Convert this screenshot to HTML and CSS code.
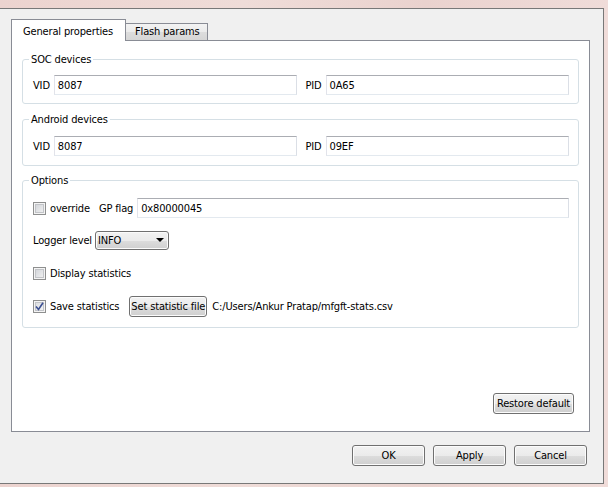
FILE: index.html
```html
<!DOCTYPE html>
<html>
<head>
<meta charset="utf-8">
<link rel="stylesheet" href="styles.css">
</head>
<body>
<div class="window">
  <div class="tabs">
    <div class="tab active">General properties</div>
    <div class="tab">Flash params</div>
  </div>
  <div class="pane">
    <fieldset class="group soc">
      <legend>SOC devices</legend>
      <div class="pair">
        <div class="field"><span class="lbl">VID</span><div class="input">8087</div></div>
        <div class="field"><span class="lbl">PID</span><div class="input">0A65</div></div>
      </div>
    </fieldset>
    <fieldset class="group android">
      <legend>Android devices</legend>
      <div class="pair">
        <div class="field"><span class="lbl">VID</span><div class="input">8087</div></div>
        <div class="field"><span class="lbl">PID</span><div class="input">09EF</div></div>
      </div>
    </fieldset>
    <fieldset class="group options">
      <legend>Options</legend>
      <div class="opt-row row1">
        <span class="check"></span><span class="cb-text">override</span>
        <span class="gp">GP flag</span>
        <div class="input grow">0x80000045</div>
      </div>
      <div class="opt-row row2">
        <span>Logger level</span>
        <div class="combo"><span>INFO</span><span class="arrow"></span></div>
      </div>
      <div class="opt-row row3">
        <span class="check"></span><span class="cb-text">Display statistics</span>
      </div>
      <div class="opt-row row4">
        <span class="check checked"><svg width="9" height="9" viewBox="0 0 9 9"><path d="M1 4.5 L3.5 7.5 L8 0.8" fill="none" stroke="#3b4f92" stroke-width="1.6"/></svg></span>
        <span class="cb-text">Save statistics</span>
        <div class="btn set">Set statistic file</div>
        <span class="path">C:/Users/Ankur Pratap/mfgft-stats.csv</span>
      </div>
    </fieldset>
    <div class="restore-row"><div class="btn restore">Restore default</div></div>
  </div>
  <div class="dialog-buttons">
    <div class="btn dlg">OK</div>
    <div class="btn dlg">Apply</div>
    <div class="btn dlg">Cancel</div>
  </div>
</div>
</body>
</html>
```
FILE: styles.css
```css
html, body {
  margin: 0;
  padding: 0;
}
body {
  width: 608px;
  height: 487px;
  overflow: hidden;
  background: linear-gradient(90deg, #ecd3cf 0%, #efdcd8 40%, #ead2ce 70%, #f0dcd9 100%);
  font-family: "DejaVu Sans Condensed", "Liberation Sans", Arial, sans-serif;
  font-size: 11px;
  letter-spacing: -0.15px;
  line-height: 13px;
  color: #000;
}
.window {
  margin-top: 8px;
  width: 604px;
  height: 476px;
  box-sizing: border-box;
  border-top: 1px solid #787878;
  border-right: 1px solid #787878;
  border-bottom: 1px solid #787878;
  background: #f0f0f0;
  padding: 10px 13px 0 11px;
}
.tabs {
  display: flex;
  align-items: flex-end;
  height: 21px;
}
.tab {
  box-sizing: border-box;
  border: 1px solid #898c95;
  border-bottom: none;
  white-space: nowrap;
}
.tab.active {
  position: relative;
  z-index: 1;
  background: #fff;
  width: 115px;
  padding: 5px 0 3px 11px;
  margin-bottom: -1px;
}
.tab:not(.active) {
  width: 82px;
  border-left: none;
  padding: 1px 0 2px 9px;
  background: linear-gradient(#f3f3f3, #ebebeb 50%, #dddddd 51%, #d6d6d6);
}
.pane {
  box-sizing: border-box;
  height: 392px;
  border: 1px solid #898c95;
  background: #fff;
  padding: 12px 10px 17px 10px;
  display: flex;
  flex-direction: column;
}
.group {
  margin: 0;
  border: 1px solid #d5dfe5;
  border-radius: 3px;
  min-width: 0;
}
.group legend {
  padding: 0 2px;
  margin-left: -4px;
  line-height: 13px;
}
.soc {
  padding: 9px 9px 8px 10px;
}
.android {
  margin-top: 9px;
  padding: 10px 9px 9px 10px;
}
.options {
  margin-top: 8px;
  padding: 11px 9px 10px 10px;
}
.pair {
  display: flex;
  gap: 9px;
}
.field {
  flex: 1;
  display: flex;
  align-items: center;
  gap: 4px;
}
.input {
  box-sizing: border-box;
  height: 20px;
  flex: 1;
  border: 1px solid;
  border-color: #abadb3 #dbdfe6 #e3e9ef #e2e3ea;
  background: #fff;
  padding: 0 3px;
  display: flex;
  align-items: center;
}
.opt-row {
  display: flex;
  align-items: center;
}
.row1 { height: 20px; }
.row2 { height: 20px; margin-top: 12px; }
.row3 { height: 22px; margin-top: 12px; }
.row4 { height: 21px; margin-top: 12px; }
.check {
  box-sizing: border-box;
  width: 13px;
  height: 13px;
  flex: none;
  border: 1px solid #8e8f8f;
  background: #f4f4f4;
  box-shadow: inset 0 0 0 1px #f4f4f4, inset 0 0 0 2px #c2c4c8;
  background-image: linear-gradient(135deg, #cdd0d5, #f5f5f5);
  display: flex;
  align-items: center;
  justify-content: center;
}
.check.checked {
  background-image: linear-gradient(135deg, #d6d9de, #f7f7f7);
}
.cb-text {
  margin-left: 4px;
}
.gp {
  margin-left: 9px;
  margin-right: 4px;
}
.grow {
  flex: 1;
}
.combo {
  box-sizing: border-box;
  margin-left: 3px;
  width: 74px;
  height: 19px;
  border: 1px solid #707070;
  border-radius: 3px;
  background: linear-gradient(#f2f2f2, #ebebeb 50%, #dddddd 51%, #cfcfcf);
  box-shadow: inset 0 0 0 1px #fbfbfb;
  display: flex;
  align-items: center;
  justify-content: space-between;
  padding: 0 4px 0 2px;
}
.arrow {
  width: 0;
  height: 0;
  border-left: 4px solid transparent;
  border-right: 4px solid transparent;
  border-top: 4px solid #000;
}
.btn {
  box-sizing: border-box;
  height: 21px;
  border: 1px solid #707070;
  border-radius: 3px;
  background: linear-gradient(#f2f2f2, #ebebeb 50%, #dddddd 51%, #cfcfcf);
  box-shadow: inset 0 0 0 1px #fcfcfc;
  display: flex;
  align-items: center;
  justify-content: center;
  white-space: nowrap;
}
.set {
  margin-left: 10px;
  width: 78px;
}
.path {
  margin-left: 5px;
}
.restore-row {
  margin-top: auto;
  display: flex;
  justify-content: flex-end;
}
.restore {
  width: 81px;
  margin-right: 5px;
}
.dialog-buttons {
  margin-top: 13px;
  display: flex;
  justify-content: flex-end;
  gap: 8px;
  padding-right: 3px;
}
.dlg {
  width: 73px;
}
```
